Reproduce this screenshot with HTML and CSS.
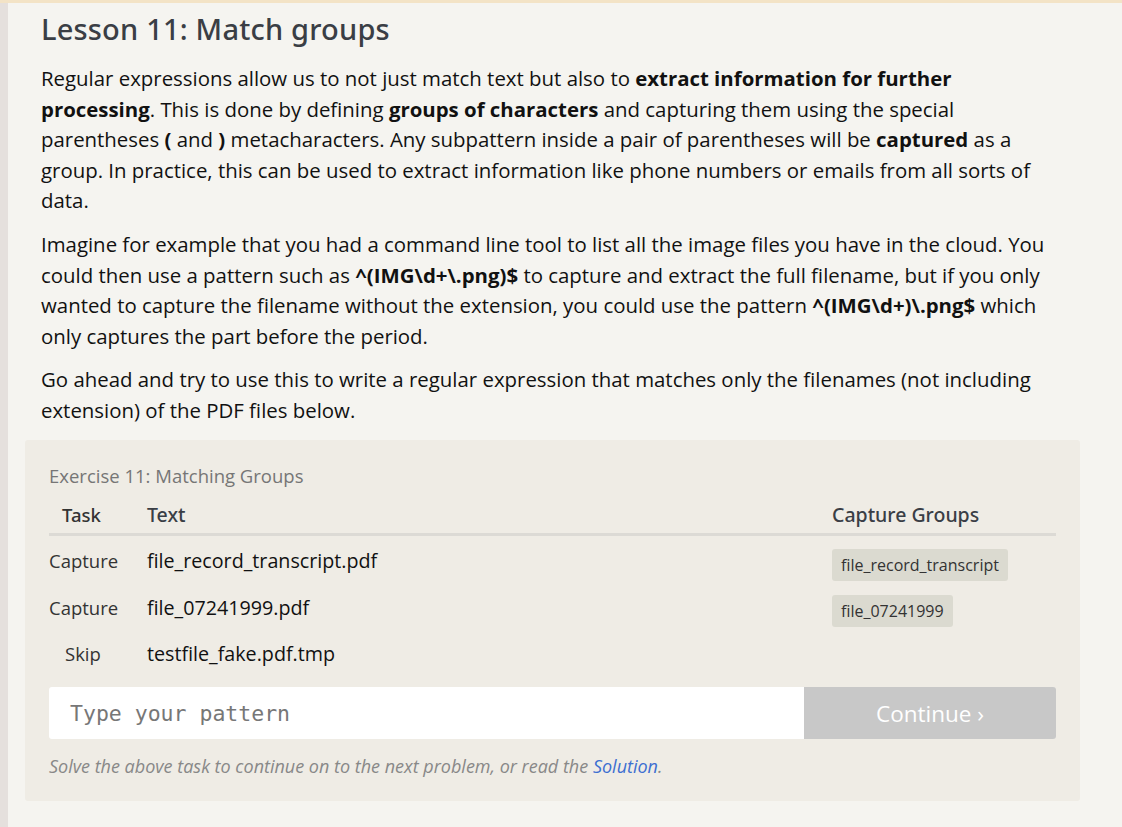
FILE: index.html
```html
<!DOCTYPE html>
<html>
<head>
<meta charset="utf-8">
<link rel="stylesheet" href="styles.css">
</head>
<body>
<div class="page">
  <div class="side"></div>
  <main class="content">
    <h1 class="title">Lesson 11: Match groups</h1>
    <p class="para">Regular expressions allow us to not just match text but also to <b>extract information for further processing</b>. This is done by defining <b>groups of characters</b> and capturing them using the special parentheses <b>(</b> and <b>)</b> metacharacters. Any subpattern inside a pair of parentheses will be <b>captured</b> as a group. In practice, this can be used to extract information like phone numbers or emails from all sorts of data.</p>
    <p class="para">Imagine for example that you had a command line tool to list all the image files you have in the cloud. You could then use a pattern such as <b>^(IMG\d+\.png)$</b> to capture and extract the full filename, but if you only wanted to capture the filename without the extension, you could use the pattern <b>^(IMG\d+)\.png$</b> which only captures the part before the period.</p>
    <p class="para">Go ahead and try to use this to write a regular expression that matches only the filenames (not including extension) of the PDF files below.</p>

    <section class="exercise">
      <div class="ex-title">Exercise 11: Matching Groups</div>
      <div class="table">
        <div class="row head">
          <div class="c-task">Task</div>
          <div class="c-text">Text</div>
          <div class="c-groups">Capture Groups</div>
        </div>
        <div class="row">
          <div class="c-task">Capture</div>
          <div class="c-text">file_record_transcript.pdf</div>
          <div class="c-groups"><span class="pill">file_record_transcript</span></div>
        </div>
        <div class="row">
          <div class="c-task">Capture</div>
          <div class="c-text">file_07241999.pdf</div>
          <div class="c-groups"><span class="pill">file_07241999</span></div>
        </div>
        <div class="row">
          <div class="c-task skip">Skip</div>
          <div class="c-text">testfile_fake.pdf.tmp</div>
          <div class="c-groups"></div>
        </div>
      </div>
      <div class="inputbar">
        <div class="input">Type your pattern</div>
        <div class="btn">Continue ›</div>
      </div>
      <p class="hint">Solve the above task to continue on to the next problem, or read the <a class="link">Solution</a>.</p>
    </section>
  </main>
</div>
</body>
</html>
```
FILE: styles.css
```css
html, body {
  margin: 0;
  padding: 0;
  background: #f5f4f0;
}
body {
  font-family: "Open Sans", "Noto Sans", sans-serif;
  color: #111;
  border-top: 3px solid #f3e3c6;
  height: 824px;
  overflow: hidden;
}
.page {
  display: flex;
  height: 100%;
}
.side {
  width: 8px;
  background: #e5e0dd;
  flex: none;
}
.content {
  padding: 8px 0 0 17px;
  width: 1055px;
}
.title {
  margin: 0 0 0 16px;
  font-family: "Noto Sans", "Open Sans", sans-serif;
  font-weight: 500;
  font-size: 29px;
  line-height: 36px;
  color: #3a3e45;
  letter-spacing: 0.2px;
}
.para {
  margin: 16px 0 0 16px;
  width: 1021px;
  font-size: 20.4px;
  line-height: 30.6px;
}
.para + .para {
  margin-top: 13px;
}
.para b { font-weight: 700; }
.exercise {
  margin-top: 14px;
  background: #efece5;
  border-radius: 3px;
  padding: 24px 24px 21px 24px;
  width: 1007px;
}
.ex-title {
  color: #767676;
  font-size: 18.5px;
  line-height: 24px;
}
.table {
  margin-top: 9px;
}
.row {
  display: flex;
  align-items: center;
  height: 46.5px;
}
.row.head {
  height: 36px;
  margin-bottom: 2px;
  border-bottom: 3px solid #dcdad5;
  font-family: "Noto Sans", "Open Sans", sans-serif;
  font-weight: 500;
  font-size: 19.5px;
  color: #3a3e45;
}
.row.head .c-task { padding-left: 13px; width: 85px; }
.c-task {
  width: 98px;
  font-size: 18.5px;
  color: #333;
}
.c-task.skip { padding-left: 16px; width: 82px; }
.c-text {
  flex: 1;
  font-size: 19.7px;
  color: #111;
}
.row.head .c-text { font-size: 19.5px; color: #3a3e45; }
.c-groups {
  width: 224px;
}
.row:not(.head) .c-groups { padding-top: 8px; }
.pill {
  display: inline-block;
  background: #dbdad0;
  border-radius: 3px;
  padding: 3px 9px;
  font-size: 16px;
  color: #333;
  line-height: 26px;
}
.inputbar {
  margin-top: 10px;
  display: flex;
  height: 52px;
}
.input {
  flex: 1;
  background: #fff;
  border-radius: 3px 0 0 3px;
  font-family: "DejaVu Sans Mono", "Liberation Mono", monospace;
  font-size: 21.5px;
  color: #777;
  padding-left: 21px;
  display: flex;
  align-items: center;
}
.btn {
  width: 252px;
  background: #c8c8c8;
  border-radius: 0 3px 3px 0;
  color: #fff;
  font-size: 22.5px;
  display: flex;
  align-items: center;
  justify-content: center;
}
.hint {
  margin: 13px 0 0 0;
  font-style: italic;
  font-size: 18px;
  line-height: 28px;
  color: #888;
}
.link { color: #3d6fd1; }
```
